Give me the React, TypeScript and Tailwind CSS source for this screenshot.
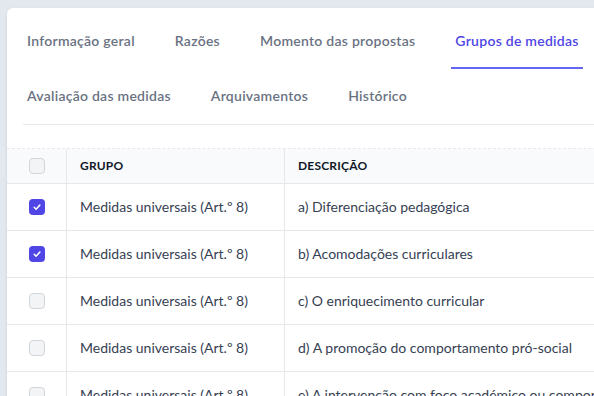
import React from "react";

const tabsRow = [
  { label: "Informação geral" },
  { label: "Razões" },
  { label: "Momento das propostas" },
  { label: "Grupos de medidas", active: true },
  { label: "Avaliação das medidas" },
  { label: "Arquivamentos" },
  { label: "Histórico" },
];

const rows = [
  { checked: true, desc: "a) Diferenciação pedagógica" },
  { checked: true, desc: "b) Acomodações curriculares" },
  { checked: false, desc: "c) O enriquecimento curricular" },
  { checked: false, desc: "d) A promoção do comportamento pró-social" },
  { checked: false, desc: "e) A intervenção com foco académico ou comportamental em pequenos grupos" },
];

function Check({ checked }: { checked: boolean }) {
  if (checked) {
    return (
      <div className="w-4 h-4 rounded-[4px] bg-[#4f46e5] flex items-center justify-center">
        <svg width="10" height="10" viewBox="0 0 16 16" fill="none">
          <path d="M3.5 8.5l3 3 6-6.5" stroke="white" strokeWidth="2.4" strokeLinecap="round" strokeLinejoin="round" />
        </svg>
      </div>
    );
  }
  return <div className="w-4 h-4 rounded-[4px] bg-gray-100 border border-gray-300" />;
}

export default function App() {
  return (
    <div
      className="w-[594px] h-[396px] overflow-hidden bg-[#e3e7ee] pt-2 pl-[7px]"
      style={{ fontFamily: "Lato, 'Noto Sans', sans-serif" }}
    >
      <div className="w-[900px] h-[420px] bg-white rounded-tl-md shadow-sm pt-[6px]">
        <div className="ml-4 border-b border-gray-200 flex flex-wrap gap-x-8 w-[800px] pr-[200px]">
          {tabsRow.map((t) => (
            <div
              key={t.label}
              className={
                "h-[55px] px-1 flex items-center border-b-2 text-sm font-semibold tracking-[0.26px] whitespace-nowrap " +
                (t.active ? "border-[#6366f1] text-[#4f46e5]" : "border-transparent text-gray-500")
              }
            >
              <span className="pt-[1px]">{t.label}</span>
            </div>
          ))}
        </div>
        <div className="mt-[23px] border-t border-dashed border-gray-200">
          <div className="flex h-[35px] bg-gray-50 border-b border-gray-200">
            <div className="w-[60px] flex items-center justify-center border-r border-gray-200">
              <Check checked={false} />
            </div>
            <div className="w-[218px] flex items-center pl-[13px] border-r border-gray-200 text-xs font-bold tracking-[0.2px] text-gray-900">
              GRUPO
            </div>
            <div className="flex items-center pl-[13px] text-xs font-bold tracking-[0.2px] text-gray-900">DESCRIÇÃO</div>
          </div>
          {rows.map((r, i) => (
            <div key={i} className="flex h-[47px] border-b border-gray-200">
              <div className="w-[60px] flex items-center justify-center border-r border-gray-200">
                <Check checked={r.checked} />
              </div>
              <div className="w-[218px] flex items-center pl-[13px] border-r border-gray-200 text-sm text-gray-700 whitespace-nowrap">
                Medidas universais (Art.º 8)
              </div>
              <div className="flex items-center pl-[13px] text-sm text-gray-700 whitespace-nowrap">{r.desc}</div>
            </div>
          ))}
        </div>
      </div>
    </div>
  );
}
